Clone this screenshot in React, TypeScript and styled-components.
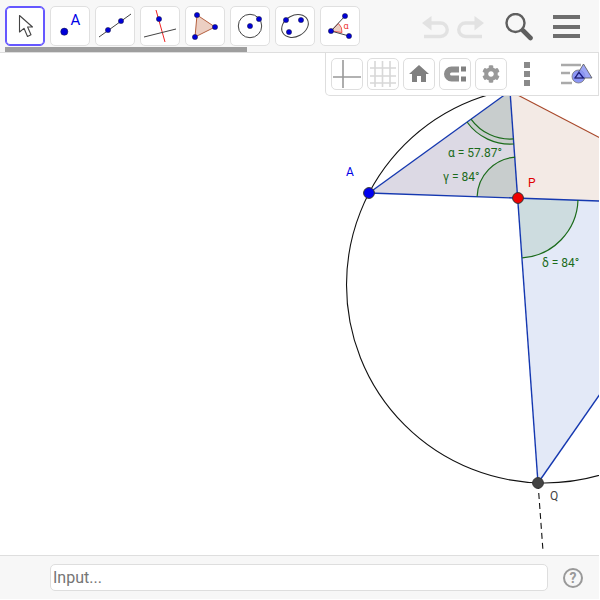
import styled, { createGlobalStyle } from "styled-components";
import { MdHome } from "react-icons/md";
import { FaCog } from "react-icons/fa";

const GlobalStyle = createGlobalStyle`
    html, body {
        margin: 0;
        padding: 0;
        background: #fff;
    }
    * {
        box-sizing: border-box;
    }
`;

const BLUE = "#0000e6";
const GREEN = "#1b6b1b";

const ToolPoint = ({ x, y, r = 2.6 }: { x: number; y: number; r?: number }) => (
    <circle cx={x} cy={y} r={r} fill="#0000d8" stroke="#1a1a3a" strokeWidth={0.5} />
);

const TOOLS = [
    <path d="M14.5 9.5V26L19 22.3 22.5 30.5 26 28.8 22.6 21H27.5Z" fill="#fff" stroke="#444" strokeWidth={1.1} strokeLinejoin="round" />,
    <>
        <ToolPoint x={14.3} y={25.7} r={3.6} />
        <text x={20.5} y={19} fontFamily="Roboto, sans-serif" fontSize={15} fill="#0000e6">A</text>
    </>,
    <>
        <line x1={4} y1={31} x2={36} y2={8} stroke="#444" strokeWidth={1} />
        <ToolPoint x={13} y={24} />
        <ToolPoint x={26} y={15} />
    </>,
    <>
        <line x1={16} y1={4} x2={25} y2={36} stroke="#ee2222" strokeWidth={1} />
        <line x1={4} y1={31} x2={36} y2={23} stroke="#444" strokeWidth={1} />
        <ToolPoint x={19} y={13} />
    </>,
    <>
        <polygon points="12,9 30,21 10,31" fill="#eccfc3" stroke="#b5603f" strokeWidth={1} />
        <ToolPoint x={12} y={9} />
        <ToolPoint x={30} y={21} />
        <ToolPoint x={10} y={31} />
    </>,
    <>
        <circle cx={20} cy={20} r={11.7} fill="none" stroke="#444" strokeWidth={1} />
        <ToolPoint x={20} y={20} />
        <ToolPoint x={29} y={13} />
    </>,
    <>
        <ellipse cx={20} cy={20} rx={14} ry={10.5} transform="rotate(-28 20 20)" fill="none" stroke="#444" strokeWidth={1} />
        <ToolPoint x={11} y={14} />
        <ToolPoint x={26} y={14} />
        <ToolPoint x={14} y={26} />
    </>,
    <>
        <path d="M11 25L18.5 17.5A11 11 0 0 1 22 26.5Z" fill="#eccfc3" stroke="#ee3333" strokeWidth={0.8} />
        <line x1={11} y1={25} x2={25} y2={10} stroke="#444" strokeWidth={1} />
        <line x1={11} y1={25} x2={29} y2={30} stroke="#444" strokeWidth={1} />
        <text x={23.5} y={23} fontFamily="Roboto, sans-serif" fontSize={9} fill="#ee3333">α</text>
        <ToolPoint x={11} y={25} />
        <ToolPoint x={25} y={10} />
        <ToolPoint x={29} y={30} />
    </>,
];

export default function App() {
    return (
        <Page>
            <GlobalStyle />
            <Toolbar>
                {TOOLS.map((icon, i) => (
                    <ToolButton key={i} $active={i === 0}>
                        <svg width={38} height={38} viewBox="1 1 38 38">{icon}</svg>
                    </ToolButton>
                ))}
                <ActionGroup>
                    <HistoryGroup>
                        <svg width={28} height={28} viewBox="0 0 28 28">
                            <path d="M4 10H19.500A6.750 6.750 0 0 1 19.500 23.500H3" fill="none" stroke="#e2e2e2" strokeWidth={3.4} />
                            <path d="M10.500 3L1 10 10.500 17.500Z" fill="#e2e2e2" />
                        </svg>
                        <svg width={28} height={28} viewBox="0 0 28 28">
                            <path d="M24 10H8.500A6.750 6.750 0 0 0 8.500 23.500H25" fill="none" stroke="#e2e2e2" strokeWidth={3.4} />
                            <path d="M17.500 3L27 10 17.500 17.500Z" fill="#e2e2e2" />
                        </svg>
                    </HistoryGroup>
                    <svg width={28} height={28} viewBox="0 0 28 28">
                        <circle cx={10.5} cy={10} r={9} fill="none" stroke="#5f5f5f" strokeWidth={2.4} />
                        <line x1={18} y1={17.5} x2={25.500} y2={25} stroke="#5f5f5f" strokeWidth={4.6} strokeLinecap="round" />
                    </svg>
                    <MenuIcon>
                        <MenuBar />
                        <MenuBar />
                        <MenuBar />
                    </MenuIcon>
                </ActionGroup>
                <ScrollThumb />
            </Toolbar>
            <Canvas>
                <svg width={599} height={502} viewBox="0 53 599 502" style={{ display: "block" }}>
                    <polygon points="369,193 510,91 518,198" fill="#dcd9e4" />
                    <polygon points="510,91 600,138 600,201 518,198" fill="#f3eae5" />
                    <polygon points="518,198 600,201 600,394 538,483" fill="#e3e9f7" />
                    <path d="M510 91L467 122A53 53 0 0 0 514 144Z" fill="#c8cdcd" />
                    <path d="M518 198L477.1 196.6A41 41 0 0 1 515.1 157.1Z" fill="#c8cdcd" />
                    <path d="M518 198L578 200.1A60 60 0 0 1 522.2 257.9Z" fill="#cddcdf" />

                    <circle cx={544.7} cy={284.8} r={198.2} fill="none" stroke="#111" strokeWidth={1.1} />

                    <line x1={510} y1={91} x2={600} y2={138} stroke="#a8482a" strokeWidth={1.1} />
                    <line x1={369} y1={193} x2={510} y2={91} stroke="#1538b0" strokeWidth={1.4} />
                    <line x1={369} y1={193} x2={600} y2={201} stroke="#1538b0" strokeWidth={1.4} />
                    <line x1={510} y1={91} x2={538} y2={483} stroke="#1538b0" strokeWidth={1.4} />
                    <line x1={538} y1={483} x2={600} y2={394} stroke="#1538b0" strokeWidth={1.4} />
                    <line x1={538} y1={483} x2={543} y2={551} stroke="#111" strokeWidth={1.1} strokeDasharray="6 4" />

                    <path d="M467 122A53 53 0 0 0 514 144" fill="none" stroke={GREEN} strokeWidth={1.2} />
                    <path d="M471 119.1A48 48 0 0 0 513.6 138.9" fill="none" stroke={GREEN} strokeWidth={1.2} />
                    <path d="M477.1 196.6A41 41 0 0 1 515.1 157.1" fill="none" stroke={GREEN} strokeWidth={1.2} />
                    <path d="M578 200.1A60 60 0 0 1 522.2 257.9" fill="none" stroke={GREEN} strokeWidth={1.2} />

                    <CanvasLabel x={448} y={157} fill={GREEN}>α = 57.87°</CanvasLabel>
                    <CanvasLabel x={443} y={181} fill={GREEN}>γ = 84°</CanvasLabel>
                    <CanvasLabel x={542} y={267} fill={GREEN}>δ = 84°</CanvasLabel>
                    <CanvasLabel x={346} y={176} fill={BLUE}>A</CanvasLabel>
                    <CanvasLabel x={528} y={187} fill="#e00000">P</CanvasLabel>
                    <CanvasLabel x={550} y={500} fill="#444">Q</CanvasLabel>

                    <circle cx={369} cy={193} r={5.4} fill="#0000f0" stroke="#333" strokeWidth={1} />
                    <circle cx={518} cy={198} r={5.4} fill="#f00000" stroke="#333" strokeWidth={1} />
                    <circle cx={538} cy={483} r={5.4} fill="#444" stroke="#333" strokeWidth={1} />
                </svg>
                <StylePanel>
                    <StyleButton>
                        <svg width={30} height={30} viewBox="1 1 30 30">
                            <path d="M12 2V30M2 19H30" stroke="#999" strokeWidth={1.6} fill="none" />
                        </svg>
                    </StyleButton>
                    <StyleButton>
                        <svg width={30} height={30} viewBox="1 1 30 30">
                            <path d="M8 3V29M15.500 3V29M23 3V29M3 10H29M3 18H29M3 25H29" stroke="#d8d8d8" strokeWidth={1.6} fill="none" />
                        </svg>
                    </StyleButton>
                    <StyleButton>
                        <MdHome size={24} color="#808080" />
                    </StyleButton>
                    <StyleButton>
                        <svg width={30} height={30} viewBox="1 1 30 30">
                            <path d="M20 11.500H12.500A4.500 4.500 0 0 0 12.500 20.500H20" fill="none" stroke="#8c8c8c" strokeWidth={6} />
                            <path d="M22 8.500H27V13.500H22ZM22 18.500H27V23.500H22Z" fill="#808080" />
                        </svg>
                    </StyleButton>
                    <StyleButton>
                        <FaCog size={18} color="#999" />
                    </StyleButton>
                    <MoreDots>
                        <Dot />
                        <Dot />
                        <Dot />
                    </MoreDots>
                    <ViewIcon width={34} height={26} viewBox="0 0 34 26">
                        <path d="M1 3H21M1 11H10M1 21H12" stroke="#aaa" strokeWidth={2.4} fill="none" />
                        <circle cx={18.5} cy={14.5} r={6.5} fill="#8c96f5" stroke="#777" strokeWidth={0.8} />
                        <polygon points="23.500,2 32,16 15,16" fill="#8c96f5" fillOpacity={0.85} stroke="#555" strokeWidth={0.8} />
                        <polygon points="19,10.500 23.500,16 15,16" fill="none" stroke="#1a1a80" strokeWidth={1.2} />
                    </ViewIcon>
                </StylePanel>
            </Canvas>
            <BottomBar>
                <InputBox placeholder="Input..." readOnly />
                <svg width={22} height={22} viewBox="0 0 22 22">
                    <circle cx={11} cy={11} r={9} fill="none" stroke="#999" strokeWidth={2} />
                    <HelpMark x={11} y={15.500} textAnchor="middle">?</HelpMark>
                </svg>
            </BottomBar>
        </Page>
    );
}

const Page = styled.div`
    width: 599px;
    height: 599px;
    display: flex;
    flex-direction: column;
    background: #fff;
    overflow: hidden;
    font-family: Roboto, sans-serif;
`;

const Toolbar = styled.div`
    position: relative;
    flex: 0 0 53px;
    display: flex;
    gap: 5px;
    padding: 6px 19px 0 5px;
    background: #f7f7f7;
    border-bottom: 1px solid #dedede;
`;

const ToolButton = styled.div<{ $active: boolean }>`
    width: 40px;
    height: 40px;
    background: #fff;
    border: 1px solid ${(p) => (p.$active ? "#6557ff" : "#e0e0e0")};
    box-shadow: ${(p) => (p.$active ? "inset 0 0 0 1px #6557ff" : "none")};
    border-radius: 5px;
    svg {
        display: block;
    }
`;

const ActionGroup = styled.div`
    margin-left: auto;
    margin-top: 7px;
    display: flex;
    gap: 20px;
    height: 28px;
`;

const HistoryGroup = styled.div`
    display: flex;
    gap: 8px;
`;

const MenuIcon = styled.div`
    width: 27px;
    height: 28px;
    padding-top: 2px;
    display: flex;
    flex-direction: column;
    gap: 5.5px;
`;

const MenuBar = styled.div`
    height: 4px;
    background: #6e6e6e;
`;

const ScrollThumb = styled.div`
    position: absolute;
    left: 5px;
    bottom: 0;
    width: 242px;
    height: 5px;
    background: #9e9e9e;
`;

const Canvas = styled.div`
    position: relative;
    flex: 1;
    min-height: 0;
    background: #fff;
`;

const CanvasLabel = styled.text`
    font-family: Roboto, sans-serif;
    font-size: 12px;
`;

const StylePanel = styled.div`
    position: absolute;
    top: 0;
    right: 0;
    width: 274px;
    height: 43px;
    display: flex;
    align-items: flex-start;
    gap: 4px;
    padding: 5px 0 0 5px;
    background: #fff;
    border: 1px solid #dedede;
    border-top: none;
    border-bottom-left-radius: 5px;
`;

const StyleButton = styled.div`
    width: 32px;
    height: 32px;
    display: flex;
    align-items: center;
    justify-content: center;
    background: #fff;
    border: 1px solid #dedede;
    border-radius: 5px;
`;

const MoreDots = styled.div`
    margin: 4px 0 0 13px;
    display: flex;
    flex-direction: column;
    gap: 3px;
`;

const Dot = styled.div`
    width: 6px;
    height: 6px;
    background: #8a8a8a;
`;

const ViewIcon = styled.svg`
    margin: 4px 0 0 26px;
`;

const BottomBar = styled.div`
    flex: 0 0 44px;
    display: flex;
    align-items: center;
    gap: 14px;
    padding: 0 15px 0 50px;
    background: #f7f7f7;
    border-top: 1px solid #dedede;
`;

const InputBox = styled.input`
    width: 498px;
    height: 27px;
    padding: 0 2px;
    background: #fff;
    border: 1px solid #dedede;
    border-radius: 5px;
    outline: none;
    font-family: Roboto, sans-serif;
    font-size: 16px;
    &::placeholder {
        color: #757575;
    }
`;

const HelpMark = styled.text`
    font-family: Roboto, sans-serif;
    font-size: 14px;
    font-weight: 700;
    fill: #999;
`;
